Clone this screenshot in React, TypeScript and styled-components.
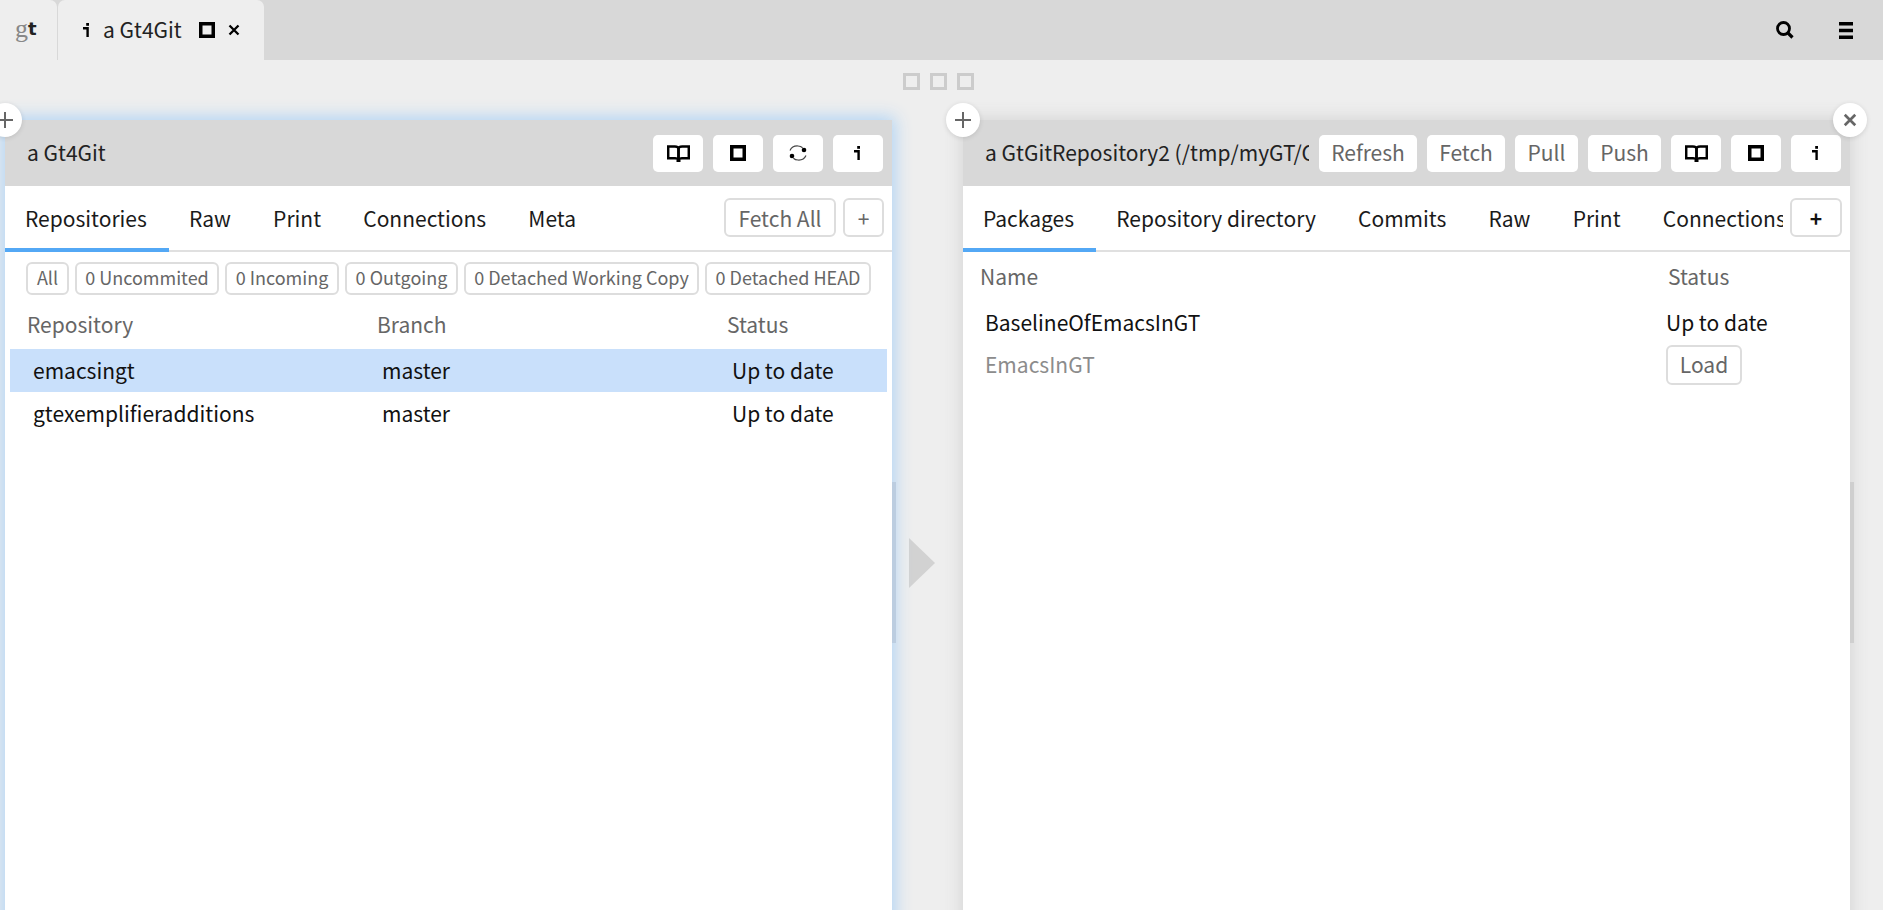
import React from 'react'
import styled, { createGlobalStyle } from 'styled-components'

const GlobalStyle = createGlobalStyle`
  html, body { margin: 0; padding: 0; height: 100%; overflow: hidden; background: #eeeeee; }
  body { font-family: "Noto Sans CJK JP", "Noto Sans", sans-serif; color: #111; }
  * { box-sizing: border-box; }
`

const Page = styled.div`
  height: 910px;
  display: flex;
  flex-direction: column;
  overflow: hidden;
`

const TopBar = styled.header`
  height: 60px;
  flex: none;
  background: #d8d8d8;
  display: flex;
  align-items: stretch;
`

const HomeTab = styled.div`
  width: 57px;
  background: #eeeeee;
  border-top-right-radius: 7px;
  padding: 0 0 3px 15px;
  display: flex;
  align-items: center;
  line-height: 1;
  margin-right: 1px;
`

const LogoG = styled.span`
  font-family: "Liberation Serif", serif;
  font-size: 26px;
  color: #888;
`

const LogoT = styled.span`
  font-family: "DejaVu Sans", sans-serif;
  font-weight: 700;
  font-size: 18px;
  color: #222;
`

const WindowTab = styled.div`
  width: 206px;
  background: #eeeeee;
  border-top-left-radius: 7px;
  border-top-right-radius: 7px;
  padding-left: 25px;
  display: flex;
  align-items: center;
  font-size: 21px;
  color: #222;
`

const TabTitle = styled.span`
  margin-left: 11px;
  margin-right: 19px;
  width: 77px;
  white-space: nowrap;
  line-height: 1;
  margin-bottom: 1px;
`

const TabClose = styled.span`
  margin-left: 13px;
`

const TopActions = styled.div`
  margin-left: auto;
  display: flex;
  align-items: center;
  gap: 45px;
  padding-right: 30px;
`

const Dots = styled.div`
  height: 60px;
  flex: none;
  display: flex;
  justify-content: center;
  gap: 10px;
  padding: 13px 6px 0 0;
`

const Dot = styled.span`
  width: 17px;
  height: 17px;
  border: 3px solid #cccccc;
`

const Panes = styled.div`
  flex: 1;
  min-height: 0;
  display: flex;
  padding-left: 5px;
`

const Pane = styled.section<{ $focused?: boolean }>`
  width: 887px;
  height: 886px;
  flex: none;
  background: #fff;
  position: relative;
  box-shadow: ${p => (p.$focused ? '0 0 16px 3px #b0d4f5' : '0 0 16px 2px #d6d6d6')};
`

const PaneGap = styled.div`
  width: 71px;
  flex: none;
  display: flex;
  align-items: center;
  padding-left: 17px;
  height: 886px;
`

const Arrow = styled.div`
  width: 0;
  height: 0;
  border-top: 25px solid transparent;
  border-bottom: 25px solid transparent;
  border-left: 26px solid #d2d2d2;
`

const Thumb = styled.div<{ $focused?: boolean }>`
  position: absolute;
  right: -4px;
  top: 362px;
  width: 4px;
  height: 161px;
  background: ${p => (p.$focused ? '#bccde0' : '#cfcfcf')};
`

const RoundButton = styled.button<{ $side: 'left' | 'right' }>`
  position: absolute;
  top: -17px;
  ${p => (p.$side === 'left' ? 'left: -17px;' : 'right: -17px;')}
  width: 34px;
  height: 34px;
  border: 0;
  padding: 0;
  border-radius: 50%;
  background: #fff;
  box-shadow: 0 1px 5px rgba(0, 0, 0, 0.12);
  display: flex;
  align-items: center;
  justify-content: center;
  z-index: 2;
`

const PaneHeader = styled.div`
  height: 66px;
  background: #d8d8d8;
  display: flex;
  align-items: center;
  padding: 0 9px 0 22px;
  gap: 10px;
`

const PaneTitle = styled.div`
  flex: 1;
  min-width: 0;
  white-space: nowrap;
  overflow: hidden;
  font-size: 21px;
  line-height: 30px;
  padding-bottom: 2px;
  color: #222;
`

const HeaderButton = styled.button<{ $w: number }>`
  width: ${p => p.$w}px;
  height: 37px;
  flex: none;
  border: 0;
  padding: 0;
  border-radius: 5px;
  background: #fff;
  font-family: inherit;
  font-size: 21px;
  color: #666;
  display: flex;
  align-items: center;
  justify-content: center;
`

const HeaderLabel = styled.span`
  line-height: 30px;
  margin-bottom: 2px;
`

const TabRow = styled.div`
  height: 66px;
  display: flex;
  align-items: stretch;
  border-bottom: 2px solid #e0e0e0;
  padding-right: 8px;
`

const TabList = styled.div`
  flex: 1;
  min-width: 0;
  display: flex;
  overflow: hidden;
  margin-bottom: -2px;
`

const PaneTab = styled.div<{ $active?: boolean }>`
  flex: none;
  padding: 0 22.2px 0 20px;
  height: 66px;
  line-height: 65px;
  font-size: 21px;
  color: #1a1a1a;
  white-space: nowrap;
  border-bottom: 4px solid ${p => (p.$active ? '#53a8f5' : 'transparent')};
`

const TabActions = styled.div`
  display: flex;
  align-items: center;
  gap: 7px;
  padding: 0 0 2px 7px;
`

const OutlineButton = styled.button<{ $w: number; $dark?: boolean }>`
  width: ${p => p.$w}px;
  height: 39px;
  padding: 2px 0 0;
  border: 2px solid #dddddd;
  border-radius: 6px;
  background: #fff;
  font-family: inherit;
  font-size: 21px;
  font-weight: ${p => (p.$dark ? 700 : 400)};
  line-height: 33px;
  color: ${p => (p.$dark ? '#111' : '#666')};
`

const Filters = styled.div`
  display: flex;
  gap: 6px;
  padding: 10px 0 0 21px;
`

const Filter = styled.span<{ $w: number }>`
  width: ${p => p.$w}px;
  height: 33px;
  border: 2px solid #dddddd;
  border-radius: 6px;
  font-size: 18px;
  line-height: 27px;
  color: #666;
  text-align: center;
  white-space: nowrap;
`

const RepoGrid = styled.div<{ $header?: boolean; $selected?: boolean }>`
  display: grid;
  grid-template-columns: ${p => (p.$header ? '350px 350px 1fr' : '349px 350px 1fr')};
  height: ${p => (p.$header ? '54px' : '43px')};
  margin: 0 5px;
  padding-left: ${p => (p.$header ? '17px' : '23px')};
  background: ${p => (p.$selected ? '#c9e0fb' : 'transparent')};
  font-size: 21px;
  line-height: ${p => (p.$header ? '58px' : '43px')};
  color: ${p => (p.$header ? '#666' : '#111')};
  white-space: nowrap;
`

const PackageGrid = styled.div<{ $header?: boolean; $muted?: boolean }>`
  display: grid;
  grid-template-columns: ${p => (p.$header ? '688px' : '681px')} 1fr;
  height: ${p => (p.$header ? '50px' : '42px')};
  padding-left: ${p => (p.$header ? '17px' : '22px')};
  font-size: 21px;
  line-height: ${p => (p.$header ? '48px' : '41px')};
  color: ${p => (p.$header ? '#666' : p.$muted ? '#8c8c8c' : '#111')};
  white-space: nowrap;
`

const LoadButton = styled.button`
  width: 76px;
  height: 40px;
  padding: 0;
  border: 2px solid #dddddd;
  border-radius: 6px;
  background: #fff;
  font-family: inherit;
  font-size: 21px;
  line-height: 33px;
  color: #666;
`

const Svg = styled.svg`
  display: block;
  flex: none;
`

function BookIcon() {
  return (
    <Svg width="23" height="17" viewBox="0 0 23 17">
      <path d="M1.2 1.5h6.6c2 0 3.7.7 3.7 2.4v10.6c-.6-.7-1.9-1.2-3.4-1.2H1.2z" fill="none" stroke="#000" strokeWidth="2.5" />
      <path d="M21.8 1.5h-6.6c-2 0-3.7.7-3.7 2.4v10.6c.6-.7 1.9-1.2 3.4-1.2h6.9z" fill="none" stroke="#000" strokeWidth="2.5" />
      <path d="M9.5 15h4v2h-4z" fill="#000" />
    </Svg>
  )
}

function SquareIcon() {
  return (
    <Svg width="16" height="16" viewBox="0 0 16 16">
      <rect x="1.75" y="1.75" width="12.5" height="12.5" fill="none" stroke="#000" strokeWidth="3.5" />
    </Svg>
  )
}

function InfoIcon() {
  return (
    <Svg width="9" height="14" viewBox="0 0 9 14">
      <rect x="3.2" y="0" width="2.8" height="2.8" fill="#000" />
      <path d="M0 5.2h4.6V14" fill="none" stroke="#000" strokeWidth="2.4" />
    </Svg>
  )
}

function SyncIcon() {
  return (
    <Svg width="20" height="16" viewBox="0 0 20 16">
      <path d="M2 5.5C3.5 2.2 7 .8 10 1c2 .1 3.5.8 4.6 1.8" fill="none" stroke="#444" strokeWidth="1.2" />
      <path d="M18 10.5c-1.5 3.3-5 4.7-8 4.5-2-.1-3.5-.8-4.6-1.8" fill="none" stroke="#444" strokeWidth="1.2" />
      <circle cx="16" cy="5" r="2.3" fill="#000" />
      <circle cx="4" cy="11" r="2.3" fill="#000" />
    </Svg>
  )
}

function CloseIcon({ size, color }: { size: number; color: string }) {
  return (
    <Svg width={size} height={size} viewBox="0 0 12 12">
      <path d="M1.5 1.5l9 9M10.5 1.5l-9 9" stroke={color} strokeWidth="2.3" />
    </Svg>
  )
}

function PlusIcon() {
  return (
    <Svg width="16" height="16" viewBox="0 0 16 16">
      <path d="M8 0v16M0 8h16" stroke="#666" strokeWidth="2" />
    </Svg>
  )
}

function SearchIcon() {
  return (
    <Svg width="18" height="18" viewBox="0 0 18 18">
      <circle cx="7.5" cy="7.5" r="6" fill="none" stroke="#000" strokeWidth="2.8" />
      <path d="M12 12l4.5 4.5" stroke="#000" strokeWidth="3.2" />
    </Svg>
  )
}

function MenuIcon() {
  return (
    <Svg width="14" height="17" viewBox="0 0 14 17">
      <path d="M0 0h14v3.4H0zM0 6.8h14v3.4H0zM0 13.6h14V17H0z" fill="#000" />
    </Svg>
  )
}

const filters = [
  { label: 'All', w: 43 },
  { label: '0 Uncommited', w: 144 },
  { label: '0 Incoming', w: 114 },
  { label: '0 Outgoing', w: 113 },
  { label: '0 Detached Working Copy', w: 235 },
  { label: '0 Detached HEAD', w: 166 },
]

const repos = [
  { name: 'emacsingt', branch: 'master', status: 'Up to date', selected: true },
  { name: 'gtexemplifieradditions', branch: 'master', status: 'Up to date', selected: false },
]

export default function App() {
  return (
    <Page>
      <GlobalStyle />
      <TopBar>
        <HomeTab>
          <LogoG>g</LogoG>
          <LogoT>t</LogoT>
        </HomeTab>
        <WindowTab>
          <InfoIcon />
          <TabTitle>a Gt4Git</TabTitle>
          <SquareIcon />
          <TabClose><CloseIcon size={12} color="#000" /></TabClose>
        </WindowTab>
        <TopActions>
          <SearchIcon />
          <MenuIcon />
        </TopActions>
      </TopBar>

      <Dots>
        <Dot />
        <Dot />
        <Dot />
      </Dots>

      <Panes>
        <Pane $focused>
          <RoundButton $side="left"><PlusIcon /></RoundButton>
          <PaneHeader>
            <PaneTitle>a Gt4Git</PaneTitle>
            <HeaderButton $w={50}><BookIcon /></HeaderButton>
            <HeaderButton $w={50}><SquareIcon /></HeaderButton>
            <HeaderButton $w={50}><SyncIcon /></HeaderButton>
            <HeaderButton $w={50}><InfoIcon /></HeaderButton>
          </PaneHeader>
          <TabRow>
            <TabList>
              <PaneTab $active>Repositories</PaneTab>
              <PaneTab>Raw</PaneTab>
              <PaneTab>Print</PaneTab>
              <PaneTab>Connections</PaneTab>
              <PaneTab>Meta</PaneTab>
            </TabList>
            <TabActions>
              <OutlineButton $w={112}>Fetch All</OutlineButton>
              <OutlineButton $w={41}>+</OutlineButton>
            </TabActions>
          </TabRow>
          <Filters>
            {filters.map(f => (
              <Filter key={f.label} $w={f.w}>{f.label}</Filter>
            ))}
          </Filters>
          <RepoGrid $header>
            <span>Repository</span>
            <span>Branch</span>
            <span>Status</span>
          </RepoGrid>
          {repos.map(r => (
            <RepoGrid key={r.name} $selected={r.selected}>
              <span>{r.name}</span>
              <span>{r.branch}</span>
              <span>{r.status}</span>
            </RepoGrid>
          ))}
          <Thumb $focused />
        </Pane>

        <PaneGap>
          <Arrow />
        </PaneGap>

        <Pane>
          <RoundButton $side="left"><PlusIcon /></RoundButton>
          <RoundButton $side="right"><CloseIcon size={14} color="#666" /></RoundButton>
          <PaneHeader>
            <PaneTitle>a GtGitRepository2 (/tmp/myGT/GT/gt4git)</PaneTitle>
            <HeaderButton $w={98}><HeaderLabel>Refresh</HeaderLabel></HeaderButton>
            <HeaderButton $w={78}><HeaderLabel>Fetch</HeaderLabel></HeaderButton>
            <HeaderButton $w={63}><HeaderLabel>Pull</HeaderLabel></HeaderButton>
            <HeaderButton $w={73}><HeaderLabel>Push</HeaderLabel></HeaderButton>
            <HeaderButton $w={50}><BookIcon /></HeaderButton>
            <HeaderButton $w={50}><SquareIcon /></HeaderButton>
            <HeaderButton $w={50}><InfoIcon /></HeaderButton>
          </PaneHeader>
          <TabRow>
            <TabList>
              <PaneTab $active>Packages</PaneTab>
              <PaneTab>Repository directory</PaneTab>
              <PaneTab>Commits</PaneTab>
              <PaneTab>Raw</PaneTab>
              <PaneTab>Print</PaneTab>
              <PaneTab>Connections</PaneTab>
            </TabList>
            <TabActions>
              <OutlineButton $w={52} $dark>+</OutlineButton>
            </TabActions>
          </TabRow>
          <PackageGrid $header>
            <span>Name</span>
            <span>Status</span>
          </PackageGrid>
          <PackageGrid>
            <span>BaselineOfEmacsInGT</span>
            <span>Up to date</span>
          </PackageGrid>
          <PackageGrid $muted>
            <span>EmacsInGT</span>
            <span><LoadButton>Load</LoadButton></span>
          </PackageGrid>
          <Thumb />
        </Pane>
      </Panes>
    </Page>
  )
}
